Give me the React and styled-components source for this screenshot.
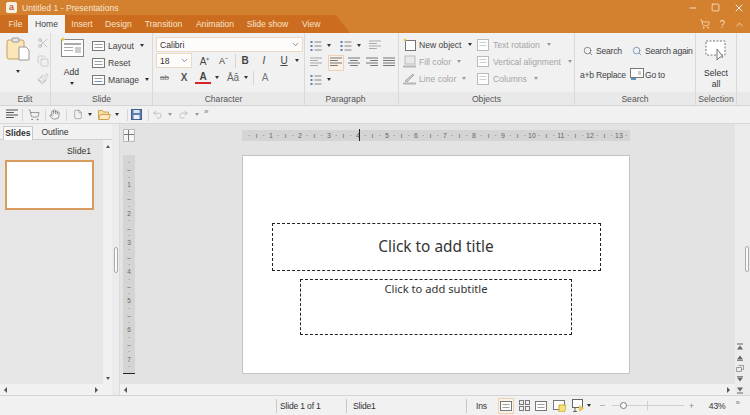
import React from 'react'
import styled, { createGlobalStyle } from 'styled-components'
import { Scissors, Copy, Paintbrush, Search, ShoppingCart, Hand, File, Undo2, Redo2, Minus, Square, X, ChevronUp, ChevronDown } from 'lucide-react'

const GlobalStyle = createGlobalStyle`
  html, body { margin: 0; padding: 0; background: #f1f1f1; }
  * { box-sizing: border-box; }
  body { font-family: "Liberation Sans", Arial, sans-serif; font-size: 8.6px; color: #333; white-space: nowrap; }
`

const Window = styled.div`
  width: 750px;
  height: 415px;
  display: flex;
  flex-direction: column;
  overflow: hidden;
`
const TitleBar = styled.div`
  height: 15px;
  background: #d4812f;
  display: flex;
  align-items: center;
  padding-left: 6px;
  color: #f6e3cf;
  font-size: 8.6px;
`
const AppLogo = styled.div`
  width: 11px;
  height: 11px;
  border-radius: 2px;
  background: #f6efe6;
  color: #c9592a;
  font-size: 9px;
  font-weight: 700;
  line-height: 11px;
  text-align: center;
  margin-right: 5px;
`
const TitleText = styled.span`
  flex: 1;
`
const WinControls = styled.div`
  display: flex;
  align-items: center;
  gap: 13px;
  padding-right: 5px;
  color: #fbeede;
`
const TabBar = styled.div`
  height: 18px;
  background: #d4812f;
  display: flex;
  align-items: stretch;
  position: relative;
`
const TabBand = styled.div`
  width: 350px;
  background: #cc6c1e;
  clip-path: polygon(0 0, 336px 0, 350px 100%, 0 100%);
  display: flex;
  align-items: flex-end;
  padding-left: 3px;
`
const Tab = styled.div`
  height: 18px;
  line-height: 19px;
  width: ${p => p.$w}px;
  text-align: center;
  color: ${p => (p.$active ? '#444' : '#f7e3cc')};
  background: ${p => (p.$active ? '#f2f2f2' : 'transparent')};
`
const ViewTab = styled.div`
  position: absolute;
  left: 302px;
  top: 0;
  line-height: 19px;
  color: #f7e3cc;
`
const TabTools = styled.div`
  margin-left: auto;
  display: flex;
  align-items: center;
  gap: 9px;
  padding-right: 5px;
  color: #f6d9b8;
  font-size: 10px;
`
const Ribbon = styled.div`
  height: 73px;
  display: flex;
  background: #f1f1f1;
  border-bottom: 1px solid #d4d4d4;
`
const Group = styled.div`
  width: ${p => p.$w}px;
  flex: none;
  display: flex;
  flex-direction: column;
  border-right: ${p => (p.$last ? 'none' : '1px solid #d9d9d9')};
`
const GroupBody = styled.div`
  flex: 1;
  display: flex;
  padding: ${p => p.$pad || '3px 0 0 4px'};
  gap: ${p => p.$gap || 0}px;
  min-height: 0;
`
const GroupLabel = styled.div`
  height: 13px;
  line-height: 14px;
  text-align: center;
  padding-right: ${p => p.$pr || 0}px;
  background: #e9e9e9;
  color: #555;
`
const Column = styled.div`
  display: flex;
  flex-direction: column;
  width: ${p => (p.$w ? `${p.$w}px` : 'auto')};
  align-items: ${p => p.$align || 'stretch'};
  gap: ${p => p.$gap || 0}px;
`
const Row = styled.div`
  height: 17px;
  display: flex;
  align-items: center;
  gap: ${p => p.$gap ?? 3}px;
  color: ${p => (p.$muted ? '#a5a5a5' : '#444')};
`
const Caret = styled.span`
  display: inline-block;
  width: 0;
  height: 0;
  flex: none;
  margin-left: ${p => p.$ml ?? 3}px;
  margin-top: ${p => p.$mt || 0}px;
  border-left: 2.5px solid transparent;
  border-right: 2.5px solid transparent;
  border-top: 3px solid ${p => (p.$muted ? '#999' : '#333')};
`
const BigLabel = styled.div`
  text-align: center;
  line-height: 11px;
  margin-top: ${p => p.$mt || 0}px;
`
const ComboBox = styled.div`
  width: ${p => p.$w}px;
  height: 15px;
  margin-top: ${p => p.$mt || 0}px;
  background: #fdfcfa;
  border: 1px solid #ead9c5;
  display: flex;
  align-items: center;
  justify-content: space-between;
  padding: 0 2px 0 3px;
  color: #333;
`
const Slot = styled.span`
  width: ${p => p.$w}px;
  flex: none;
  display: flex;
  align-items: center;
  justify-content: center;
  margin-left: ${p => p.$ml || 0}px;
  font-weight: ${p => (p.$bold ? 700 : 400)};
  font-style: ${p => (p.$italic ? 'italic' : 'normal')};
  text-decoration: ${p => (p.$under ? 'underline' : 'none')};
  color: ${p => p.$color || '#444'};
  font-size: ${p => p.$size || 10}px;
`
const FontColor = styled(Slot)`
  height: 12px;
  line-height: 10px;
  border-bottom: 2px solid #d8232a;
`
const Strike = styled(Slot)`
  text-decoration: line-through;
`
const VSep = styled.span`
  width: 1px;
  height: ${p => p.$h || 14}px;
  background: #d5d5d5;
  flex: none;
  margin-left: ${p => p.$l || 0}px;
  margin-right: ${p => p.$r || 0}px;
`
const ActiveSlot = styled(Slot)`
  height: 16px;
  background: #fbf1e6;
  border: 1px solid #ecd2b5;
`
const SearchGrid = styled.div`
  display: grid;
  grid-template-columns: 16px 33px 16px auto;
  grid-auto-rows: 17px;
  row-gap: 7px;
  align-items: center;
  color: #444;
  letter-spacing: -0.25px;
`
const CenterCell = styled.span`
  display: flex;
  justify-content: center;
`
const QuickBar = styled.div`
  height: 18px;
  flex: none;
  display: flex;
  align-items: center;
  padding-left: 5px;
  background: #f1f1f1;
  border-bottom: 1px solid #d8d8d8;
  gap: 3px;
`
const MorePill = styled.span`
  font-size: 8px;
  color: #777;
  line-height: 8px;
  align-self: flex-start;
  margin-top: ${p => p.$mt ?? 2}px;
  margin-left: ${p => p.$ml || 0}px;
`
const Main = styled.div`
  flex: 1;
  display: flex;
  min-height: 0;
  background: #e3e3e3;
`
const Side = styled.div`
  width: 112px;
  flex: none;
  display: flex;
  flex-direction: column;
  background: #e6e6e6;
`
const SideBody = styled.div`
  flex: 1;
  display: flex;
  min-height: 0;
`
const SideContent = styled.div`
  flex: 1;
  padding-left: 5px;
  display: flex;
  flex-direction: column;
`
const SideTabs = styled.div`
  height: 16px;
  display: flex;
  align-items: flex-end;
  padding-left: 3px;
  background: #f1f1f1;
  border-bottom: 1px solid #cfcfcf;
`
const SideTab = styled.div`
  width: ${p => p.$w}px;
  height: 14px;
  line-height: 13px;
  text-align: center;
  font-weight: ${p => (p.$active ? 700 : 400)};
  color: #333;
  background: ${p => (p.$active ? '#fafafa' : 'transparent')};
  border: ${p => (p.$active ? '1px solid #c8c8c8' : 'none')};
  border-bottom: none;
  position: relative;
  bottom: -1px;
`
const ThumbLabel = styled.div`
  height: 20px;
  line-height: 22px;
  width: 86px;
  text-align: right;
  color: #333;
`
const Thumb = styled.div`
  width: 89px;
  height: 50px;
  background: #fff;
  border: 2.5px solid #d99c5e;
`
const VScroll = styled.div`
  width: 9px;
  flex: none;
  background: #f1f1f1;
  display: flex;
  flex-direction: column;
  align-items: center;
  justify-content: space-between;
  padding: 5px 0 4px;
`
const ArrowUp = styled.span`
  width: 0;
  height: 0;
  border-left: 2.5px solid transparent;
  border-right: 2.5px solid transparent;
  border-bottom: 3px solid #555;
`
const ArrowDown = styled.span`
  width: 0;
  height: 0;
  border-left: 2.5px solid transparent;
  border-right: 2.5px solid transparent;
  border-top: 3px solid #555;
`
const HScroll = styled.div`
  height: 11px;
  flex: none;
  background: #f1f1f1;
  display: flex;
  align-items: center;
  justify-content: space-between;
  padding: 0 ${p => p.$right || 5}px 0 4px;
`
const ArrowLeft = styled.span`
  width: 0;
  height: 0;
  border-top: 3px solid transparent;
  border-bottom: 3px solid transparent;
  border-right: 3px solid #555;
`
const ArrowRight = styled.span`
  width: 0;
  height: 0;
  border-top: 3px solid transparent;
  border-bottom: 3px solid transparent;
  border-left: 3px solid #555;
`
const Splitter = styled.div`
  width: 8px;
  flex: none;
  background: #ececec;
  border-right: 1px solid #dcdcdc;
  display: flex;
  align-items: center;
  justify-content: center;
`
const Grip = styled.span`
  width: 4px;
  height: 26px;
  background: #fafafa;
  border: 1px solid #aaa;
  border-radius: 2px;
`
const Canvas = styled.div`
  flex: 1;
  display: flex;
  flex-direction: column;
  min-width: 0;
`
const Workspace = styled.div`
  flex: 1;
  display: grid;
  grid-template-columns: 122px 388px 1fr;
  grid-template-rows: 31px 219px 1fr;
  min-height: 0;
`
const Corner = styled.div`
  grid-column: 1;
  grid-row: 1;
  margin: 5px 0 0 3px;
  width: 12px;
  height: 13px;
  background: #f4f4f4;
  border: 1px solid #bbb;
  position: relative;
`
const CornerH = styled.span`
  position: absolute;
  left: 0;
  right: 0;
  top: 4px;
  height: 1px;
  background: #777;
`
const CornerV = styled.span`
  position: absolute;
  top: 0;
  bottom: 0;
  left: 4px;
  width: 1px;
  background: #777;
`
const HRuler = styled.div`
  grid-column: 2;
  grid-row: 1;
  height: 11px;
  margin-top: 6px;
  background: #d4d4d4;
  display: flex;
  align-items: center;
  padding-left: 3.5px;
  color: #666;
  font-size: 7px;
  position: relative;
`
const RulerMark = styled.span`
  width: 7.25px;
  flex: none;
  display: flex;
  justify-content: center;
`
const RulerCursor = styled.span`
  position: absolute;
  left: 117px;
  top: -1px;
  width: 1px;
  height: 12px;
  background: #222;
`
const VRuler = styled.div`
  grid-column: 1;
  grid-row: 2;
  margin-left: 3px;
  width: 12px;
  background: #d4d4d4;
  border-bottom: 1px solid #222;
  display: flex;
  flex-direction: column;
  align-items: center;
  justify-content: space-between;
  padding: 4px 0 3px;
  color: #666;
  font-size: 6.5px;
  line-height: 7px;
`
const Slide = styled.div`
  grid-column: 2;
  grid-row: 2;
  background: #fff;
  border: 1px solid #c4c4c4;
  display: flex;
  flex-direction: column;
  align-items: center;
  padding-top: 67px;
  gap: 8px;
  font-family: "Noto Sans", "DejaVu Sans", sans-serif;
`
const TitleBox = styled.div`
  width: 329px;
  height: 48px;
  border: 1px dashed #222;
  display: flex;
  align-items: center;
  justify-content: center;
  padding-bottom: 2px;
  font-size: 15.4px;
  color: #333;
`
const SubBox = styled.div`
  width: 272px;
  height: 56px;
  border: 1px dashed #222;
  text-align: center;
  font-size: 11.2px;
  line-height: 18px;
  color: #333;
`
const RightBar = styled.div`
  width: 15px;
  flex: none;
  background: #ececec;
  display: flex;
  flex-direction: column;
`
const RightGrip = styled.span`
  width: 4px;
  height: 26px;
  background: #fafafa;
  border: 1px solid #aaa;
  border-radius: 2px;
  margin: 122px 0 0 10px;
`
const RightBtns = styled.div`
  margin-top: auto;
  width: 10px;
  display: flex;
  flex-direction: column;
  align-items: center;
  gap: 4px;
  padding-bottom: 1px;
`
const StatusBar = styled.div`
  height: 20px;
  flex: none;
  background: #f1f1f1;
  border-top: 1px solid #d4d4d4;
  display: flex;
  align-items: center;
  color: #333;
  letter-spacing: -0.2px;
`
const StatusCell = styled.div`
  width: ${p => p.$w}px;
  flex: none;
  height: 14px;
  line-height: 14px;
  padding-left: ${p => p.$pl || 0}px;
  border-left: ${p => (p.$sep ? '1px solid #c9c9c9' : 'none')};
`
const ViewBtn = styled.span`
  width: 16px;
  height: 16px;
  display: flex;
  align-items: center;
  justify-content: center;
  flex: none;
  margin-right: ${p => p.$mr ?? 3}px;
  background: ${p => (p.$active ? '#fbf1e6' : 'transparent')};
  border: ${p => (p.$active ? '1px solid #ecd2b5' : 'none')};
`
const ZoomTrack = styled.div`
  width: 72px;
  height: 1px;
  background: #cfcfcf;
  margin: 0 5px 0 6px;
  position: relative;
`
const ZoomThumb = styled.span`
  position: absolute;
  left: 8px;
  top: -3px;
  width: 7px;
  height: 7px;
  background: #fff;
  border: 1px solid #777;
  border-radius: 50%;
`
const ZoomTick = styled.span`
  position: absolute;
  left: 35px;
  top: -4px;
  width: 1px;
  height: 9px;
  background: #cfcfcf;
`
const ZoomMinus = styled(Minus)`
  margin-left: 8px;
`
const ZoomPlus = styled.span`
  color: #888;
`
const ZoomValue = styled.span`
  margin-left: 15px;
`

// small drawings used around the ribbon
const Lines = ({ w = 12, n = 4, c = '#777', align = 'left' }) => {
  const h = n * 2.5 + 1
  return (
    <svg width={w} height={h} viewBox={`0 0 ${w} ${h}`}>
      {Array.from({ length: n }).map((_, i) => {
        const short = i % 2 === 1 && align !== 'justify'
        const lw = short ? w * 0.65 : w
        const x = align === 'right' ? w - lw : align === 'center' ? (w - lw) / 2 : 0
        return <rect key={i} x={x} y={i * 2.5 + 0.5} width={lw} height="1" fill={c} />
      })}
    </svg>
  )
}
const ListIcon = ({ c = '#5a7fa8' }) => (
  <svg width="12" height="12" viewBox="0 0 12 12">
    {[1, 5, 9].map(y => (
      <g key={y}>
        <rect x="0.5" y={y} width="2" height="2" fill={c} />
        <rect x="4.5" y={y + 0.5} width="7" height="1" fill="#888" />
      </g>
    ))}
  </svg>
)
const FramedLines = ({ w = 13, h = 10, c = '#777', accent }) => (
  <svg width={w} height={h} viewBox={`0 0 ${w} ${h}`}>
    <rect x="0.5" y="0.5" width={w - 1} height={h - 1} fill="#fdfdfd" stroke={c} />
    <rect x="2.5" y="3" width={w - 5} height="1" fill={c} opacity="0.7" />
    <rect x="2.5" y="6" width={w - 5} height="1" fill={accent || c} opacity="0.7" />
  </svg>
)
const PasteIcon = () => (
  <svg width="24" height="24" viewBox="0 0 24 24">
    <rect x="1" y="3" width="17" height="19" rx="2" fill="#fbe6b8" stroke="#c9a05c" />
    <rect x="6" y="1" width="7" height="4" rx="1" fill="#e6e6e6" stroke="#999" />
    <path d="M13 10h7l3 3v10H13z" fill="#fff" stroke="#999" />
  </svg>
)
const AddSlideIcon = () => (
  <svg width="24" height="20" viewBox="0 0 24 20">
    <rect x="1.5" y="2.5" width="22" height="17" fill="#fdfdfd" stroke="#888" />
    <rect x="4" y="6" width="17" height="2" fill="#aaa" />
    <rect x="4" y="10" width="9" height="1" fill="#aaa" />
    <rect x="4" y="13" width="9" height="1" fill="#aaa" />
    <rect x="15" y="10" width="6" height="6" fill="#ccc" />
    <path d="M3 0l.8 1.6L5.5 2.2 3.9 3l-.9 1.6L2.2 3 .6 2.2l1.6-.6z" fill="#eec53a" />
  </svg>
)
const SelectAllIcon = () => (
  <svg width="22" height="22" viewBox="0 0 22 22">
    <rect x="1" y="1" width="19" height="14" fill="#fff" stroke="#777" strokeDasharray="2 1.5" />
    <path d="M12 9v11l3-3 3 0z" fill="#fff" stroke="#777" />
  </svg>
)
const NewObjectIcon = () => (
  <svg width="13" height="13" viewBox="0 0 13 13">
    <rect x="2.5" y="2.5" width="10" height="10" fill="#fff" stroke="#777" />
    <path d="M2 0l.6 1.3 1.4.6-1.4.6L2 4l-.6-1.5L0 1.9l1.4-.6z" fill="#eec53a" />
  </svg>
)
const FillIcon = ({ line }) => (
  <svg width="13" height="13" viewBox="0 0 13 13">
    {line ? <path d="M2 9l8-7 1 1-7 7z" fill="#ccc" stroke="#aaa" /> : <rect x="2" y="1" width="10" height="8" fill="#e8e8e8" stroke="#bbb" />}
    <rect x="0" y="10.5" width="13" height="2" fill="#b5b5b5" />
  </svg>
)
const GoToIcon = () => (
  <svg width="14" height="13" viewBox="0 0 14 13">
    <rect x="0.5" y="0.5" width="13" height="9" fill="#fdfdfd" stroke="#777" />
    <rect x="8" y="3" width="3" height="4" fill="#ccc" />
    <path d="M1 11h5" stroke="#2c72b5" strokeWidth="1.5" />
  </svg>
)
const SaveIcon = () => (
  <svg width="11" height="11" viewBox="0 0 11 11">
    <rect x="0.5" y="0.5" width="10" height="10" fill="#5d7fb0" stroke="#3f5f90" />
    <rect x="2.5" y="1" width="6" height="3" fill="#dfe6f0" />
    <rect x="2.5" y="6" width="6" height="4" fill="#eef1f6" />
  </svg>
)
const FolderIcon = () => (
  <svg width="13" height="11" viewBox="0 0 13 11">
    <path d="M.5 1.5h4l1 1.5h5v7H.5z" fill="#fbdf9f" stroke="#cfa253" />
    <path d="M.5 10.5l2-5h10l-2 5z" fill="#fde9bd" stroke="#cfa253" />
  </svg>
)
const GridIcon = () => (
  <svg width="11" height="11" viewBox="0 0 11 11" fill="none" stroke="#777">
    <rect x="0.5" y="0.5" width="4" height="4" />
    <rect x="6.5" y="0.5" width="4" height="4" />
    <rect x="0.5" y="6.5" width="4" height="4" />
    <rect x="6.5" y="6.5" width="4" height="4" />
  </svg>
)
const NoteIcon = () => (
  <svg width="13" height="12" viewBox="0 0 13 12">
    <rect x="0.5" y="0.5" width="11" height="9" fill="#fdfdfd" stroke="#777" />
    <path d="M6 5h7v4l-2 3H6z" fill="#f5e07c" stroke="#c9ac3a" />
  </svg>
)
const ShowIcon = () => (
  <svg width="13" height="13" viewBox="0 0 13 13">
    <rect x="0.5" y="0.5" width="10" height="8" fill="#fdfdfd" stroke="#666" />
    <path d="M3 9v4M1 12.5h4" stroke="#666" />
    <path d="M7 6l5 3.5L7 13z" fill="#ecc94b" />
  </svg>
)
// the page-up / prev / pages / next / page-down buttons at the bottom right
const PageBtn = ({ kind }) => (
  <svg width="8" height="7" viewBox="0 0 8 7" fill="#666">
    {kind === 'first' && <path d="M1 .5h6v1H1zM4 2.5l3 4H1z" />}
    {kind === 'prev' && <path d="M4 1.5l3 4H1zM1 6h6v.7H1z" />}
    {kind === 'pages' && <path d="M.5 2.5h5v4h-5zM2.5 .5h5v4h-2" fill="none" stroke="#888" strokeWidth=".8" />}
    {kind === 'next' && <path d="M1 .3h6V1H1zM4 5.5l-3-4h6z" />}
    {kind === 'last' && <path d="M4 4.5l-3-4h6zM1 5.5h6v1H1z" />}
  </svg>
)

const rulerLabels = ['·']
for (let n = 1; n <= 13; n++) rulerLabels.push('ı', '·', String(n), '·')
const vRulerLabels = ['·']
for (let n = 1; n <= 7; n++) vRulerLabels.push('–', '·', String(n), '·')

const Ribbons = () => (
  <Ribbon>
    <Group $w={51}>
      <GroupBody $pad="4px 0 0 6px" $gap={5}>
        <Column $w={24} $align="center">
          <PasteIcon />
          <Caret $ml={0} $mt={9} />
        </Column>
        <Column $w={16} $align="center" $gap={6}>
          <Scissors size={12} color="#aaa" strokeWidth={1.3} />
          <Copy size={12} color="#bbb" strokeWidth={1.3} />
          <Paintbrush size={12} color="#b5b5b5" strokeWidth={1.5} />
        </Column>
      </GroupBody>
      <GroupLabel>Edit</GroupLabel>
    </Group>

    <Group $w={102}>
      <GroupBody $pad="4px 0 0 8px" $gap={8}>
        <Column $w={25} $align="center">
          <AddSlideIcon />
          <BigLabel $mt={10}>Add</BigLabel>
          <Caret $ml={0} $mt={4} />
        </Column>
        <Column>
          <Row><FramedLines /><span>Layout</span><Caret /></Row>
          <Row><FramedLines /><span>Reset</span></Row>
          <Row><FramedLines accent="#2c72b5" /><span>Manage</span><Caret /></Row>
        </Column>
      </GroupBody>
      <GroupLabel>Slide</GroupLabel>
    </Group>

    <Group $w={152}>
      <GroupBody $pad="4px 0 0 3px">
        <Column>
          <ComboBox $w={147}><span>Calibri</span><ChevronDown size={9} color="#666" /></ComboBox>
          <Row $gap={0}>
            <ComboBox $w={36}><span>18</span><ChevronDown size={9} color="#666" /></ComboBox>
            <Slot $w={19} $ml={3}>A⁺</Slot>
            <Slot $w={19} $size={9}>A⁻</Slot>
            <VSep $l={2} $r={2} />
            <Slot $w={14} $bold>B</Slot>
            <Slot $w={24} $italic>I</Slot>
            <Slot $w={16} $under>U</Slot>
            <Caret $ml={2.5} />
          </Row>
          <Row $gap={0}>
            <Strike $w={17} $size={8} $color="#777">ab</Strike>
            <Slot $w={22} $bold $color="#555">X</Slot>
            <FontColor $w={16} $bold>A</FontColor>
            <Caret $ml={3.5} />
            <Slot $w={20} $ml={4.5} $color="#666">Āā</Slot>
            <Caret $ml={1} />
            <VSep $l={5} $r={5} />
            <Slot $w={12} $color="#777">A</Slot>
          </Row>
        </Column>
      </GroupBody>
      <GroupLabel $pr={10}>Character</GroupLabel>
    </Group>

    <Group $w={94}>
      <GroupBody $pad="4px 0 0 5px">
        <Column>
          <Row $gap={0}>
            <ListIcon /><Caret $ml={5} />
            <Slot $w={16} $ml={7}><ListIcon /></Slot><Caret $ml={3} />
            <Slot $w={21} $ml={3.5}><Lines n={4} c="#aaa" /></Slot>
          </Row>
          <Row $gap={0}>
            <Slot $w={12}><Lines n={4} c="#aaa" /></Slot>
            <ActiveSlot $w={16} $ml={6}><Lines c="#777" /></ActiveSlot>
            <Slot $w={18} $ml={1}><Lines c="#777" align="center" /></Slot>
            <Slot $w={17}><Lines c="#777" align="right" /></Slot>
            <Slot $w={17}><Lines c="#777" align="justify" /></Slot>
          </Row>
          <Row $gap={0}>
            <ListIcon /><Caret $ml={5} />
          </Row>
        </Column>
      </GroupBody>
      <GroupLabel $pr={12}>Paragraph</GroupLabel>
    </Group>

    <Group $w={176}>
      <GroupBody>
        <Column $w={74}>
          <Row><NewObjectIcon /><span>New object</span><Caret /></Row>
          <Row $muted><FillIcon /><span>Fill color</span><Caret $muted /></Row>
          <Row $muted><FillIcon line /><span>Line color</span><Caret $muted /></Row>
        </Column>
        <Column>
          <Row $muted $gap={4}><FramedLines w={12} h={12} c="#bbb" /><span>Text rotation</span><Caret $muted /></Row>
          <Row $muted $gap={4}><FramedLines w={12} h={11} c="#bbb" /><span>Vertical alignment</span><Caret $muted /></Row>
          <Row $muted $gap={4}><FramedLines w={12} h={12} c="#bbb" /><span>Columns</span><Caret $muted /></Row>
        </Column>
      </GroupBody>
      <GroupLabel>Objects</GroupLabel>
    </Group>

    <Group $w={121}>
      <GroupBody $pad="9px 0 0 5px">
        <SearchGrid>
          <CenterCell><Search size={10} color="#777" /></CenterCell>
          <span>Search</span>
          <CenterCell><Search size={10} color="#6d8fae" /></CenterCell>
          <span>Search again</span>
          <span>a+b</span>
          <span>Replace</span>
          <CenterCell><GoToIcon /></CenterCell>
          <span>Go to</span>
        </SearchGrid>
      </GroupBody>
      <GroupLabel>Search</GroupLabel>
    </Group>

    <Group $w={41}>
      <GroupBody $pad="7px 0 0 0">
        <Column $w={40} $align="center">
          <SelectAllIcon />
          <BigLabel $mt={6}>Select</BigLabel>
          <BigLabel>all</BigLabel>
        </Column>
      </GroupBody>
      <GroupLabel>Selection</GroupLabel>
    </Group>
    <Group $w={13} $last>
      <GroupBody />
      <GroupLabel />
    </Group>
  </Ribbon>
)

const App = () => (
  <Window>
    <GlobalStyle />
    <TitleBar>
      <AppLogo>a</AppLogo>
      <TitleText>Untitled 1 - Presentations</TitleText>
      <WinControls>
        <Minus size={10} />
        <Square size={9} />
        <X size={12} />
      </WinControls>
    </TitleBar>
    <TabBar>
      <TabBand>
        <Tab $w={25}>File</Tab>
        <Tab $w={37} $active>Home</Tab>
        <Tab $w={34}>Insert</Tab>
        <Tab $w={39}>Design</Tab>
        <Tab $w={51}>Transition</Tab>
        <Tab $w={52}>Animation</Tab>
        <Tab $w={53}>Slide show</Tab>
      </TabBand>
      <ViewTab>View</ViewTab>
      <TabTools>
        <ShoppingCart size={10} />
        <span>?</span>
        <ChevronUp size={11} />
      </TabTools>
    </TabBar>
    <Ribbons />
    <QuickBar>
      <Slot $w={14}><Lines n={4} c="#555" /></Slot>
      <VSep $h={12} />
      <Slot $w={16}><ShoppingCart size={12} color="#777" strokeWidth={1.4} /></Slot>
      <VSep $h={12} />
      <Slot $w={11}><Hand size={13} color="#666" strokeWidth={1.4} /></Slot>
      <VSep $h={12} $l={3} $r={3} />
      <Slot $w={10}><File size={13} color="#777" strokeWidth={1.3} /></Slot>
      <Caret $ml={1.5} />
      <Slot $w={16} $ml={1.5}><FolderIcon /></Slot>
      <Caret $ml={0} />
      <VSep $h={12} $l={5} />
      <Slot $w={11}><SaveIcon /></Slot>
      <VSep $h={12} $l={3} />
      <Slot $w={11}><Undo2 size={11} color="#aaa" strokeWidth={1.4} /></Slot>
      <Caret $ml={1.5} $muted />
      <Slot $w={17}><Redo2 size={11} color="#aaa" strokeWidth={1.4} /></Slot>
      <Caret $ml={0} $muted />
      <MorePill $ml={2.5}>»</MorePill>
    </QuickBar>
    <Main>
      <Side>
        <SideTabs>
          <SideTab $w={30} $active>Slides</SideTab>
          <SideTab $w={44}>Outline</SideTab>
        </SideTabs>
        <SideBody>
          <SideContent>
            <ThumbLabel>Slide1</ThumbLabel>
            <Thumb />
          </SideContent>
          <VScroll>
            <ArrowUp />
            <ArrowDown />
          </VScroll>
        </SideBody>
        <HScroll $right={14}>
          <ArrowLeft />
          <ArrowRight />
        </HScroll>
      </Side>
      <Splitter><Grip /></Splitter>
      <Canvas>
        <Workspace>
          <Corner><CornerH /><CornerV /></Corner>
          <HRuler>
            {rulerLabels.map((t, i) => <RulerMark key={i}>{t}</RulerMark>)}
            <RulerCursor />
          </HRuler>
          <VRuler>
            {vRulerLabels.map((t, i) => <span key={i}>{t}</span>)}
          </VRuler>
          <Slide>
            <TitleBox>Click to add title</TitleBox>
            <SubBox>Click to add subtitle</SubBox>
          </Slide>
        </Workspace>
        <HScroll>
          <ArrowLeft />
          <ArrowRight />
        </HScroll>
      </Canvas>
      <RightBar>
        <RightGrip />
        <RightBtns>
          <PageBtn kind="first" />
          <PageBtn kind="prev" />
          <PageBtn kind="pages" />
          <PageBtn kind="next" />
          <PageBtn kind="last" />
        </RightBtns>
      </RightBar>
    </Main>
    <StatusBar>
      <StatusCell $w={276} />
      <StatusCell $w={70} $sep $pl={3}>Slide 1 of 1</StatusCell>
      <StatusCell $w={120} $sep $pl={6}>Slide1</StatusCell>
      <StatusCell $w={32} $sep $pl={9}>Ins</StatusCell>
      <ViewBtn $active $mr={2}><FramedLines w={12} h={10} /></ViewBtn>
      <ViewBtn $mr={1}><GridIcon /></ViewBtn>
      <ViewBtn $mr={2}><FramedLines w={12} h={10} /></ViewBtn>
      <ViewBtn $mr={3}><NoteIcon /></ViewBtn>
      <ViewBtn $mr={0}><ShowIcon /></ViewBtn>
      <Caret $ml={1} />
      <ZoomMinus size={7} color="#888" />
      <ZoomTrack>
        <ZoomThumb />
        <ZoomTick />
      </ZoomTrack>
      <ZoomPlus>+</ZoomPlus>
      <ZoomValue>43%</ZoomValue>
      <MorePill $mt={3} $ml={10}>»</MorePill>
    </StatusBar>
  </Window>
)

export default App
